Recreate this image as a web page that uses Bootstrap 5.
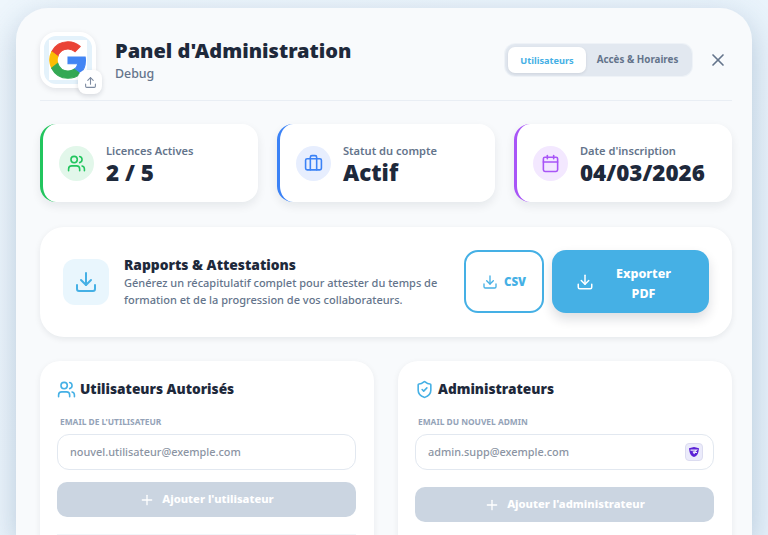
<!DOCTYPE html>
<html lang="fr">
<head>
<meta charset="utf-8">
<title>Panel d'Administration</title>
<link href="https://cdn.jsdelivr.net/npm/bootstrap@5.3.0/dist/css/bootstrap.min.css" rel="stylesheet">
<style>
html,body{height:535px;overflow:hidden}
body{font-family:"Noto Sans",sans-serif;color:#1e293b;background:linear-gradient(135deg,#eef6fc,#e6f1fa);padding:8px 16px 0}
svg.ico{fill:none;stroke:currentColor;stroke-width:2;stroke-linecap:round;stroke-linejoin:round;flex:none}
.sheet{background:#f8fafc;border-radius:32px 32px 0 0;padding:24px 20px 0 24px;height:527px;overflow:hidden;box-shadow:0 10px 30px rgba(70,110,150,.32)}
.head{height:69px;border-bottom:1px solid #e9eef4}
.logo-box{width:56px;height:56px;border:4px solid #fff;border-radius:16px;background:#e4f2fb;box-shadow:0 2px 6px rgba(15,23,42,.1);margin-right:19px}
.logo-in{width:38px;height:40px;background:#fff}
.up-btn{right:-10px;bottom:-10px;width:24px;height:24px;border-radius:8px;background:#fff;color:#7c8aa0;box-shadow:0 2px 5px rgba(15,23,42,.14)}
.ttl-w{padding-top:7px}
.ttl{font-size:20px;font-weight:900;line-height:24px;color:#1e293b;margin:0}
.sub{font-size:12.4px;line-height:20px;color:#64748b;font-weight:500;margin-top:1px}
.tabs{background:#e2e8f0;border-radius:10px;padding:2px 3px;height:32px;font-weight:700;box-shadow:0 0 0 1px #eef2f7}
.tab-on{background:#fff;color:#45b0e5;border-radius:7px;width:78px;height:26px;font-size:9.2px;padding-top:1px;box-shadow:0 1px 3px rgba(15,23,42,.1)}
.tab-off{color:#64748b;width:103px;height:26px;font-size:9.8px;padding-top:1px}
.x-btn{color:#64748b;margin:0 4px 0 16px}
.stats{gap:19px;margin-top:23px}
.stat{flex:1 1 0;height:78px;background:#fff;border-radius:16px;border-left:3px solid;box-shadow:0 4px 10px rgba(15,23,42,.08);padding-left:16px}
.st-g{border-left-color:#22c55e}.st-b{border-left-color:#3b82f6}.st-p{border-left-color:#a855f7}
.circle{width:35px;height:35px;border-radius:50%;margin-right:12px}
.c-g{background:#e2f7ea;color:#22c55e}.c-b{background:#e7eefe;color:#3b82f6}.c-p{background:#f3e8ff;color:#a855f7}
.st-t{padding-top:4px}
.st-l{font-size:11.1px;font-weight:600;line-height:16px;color:#64748b}
.st-v{font-size:22.4px;font-weight:900;line-height:28px;color:#1e293b}
.rep{height:110px;margin-top:25px;background:#fff;border-radius:24px;box-shadow:0 2px 6px rgba(15,23,42,.08);padding:0 23px}
.rep-ic{width:46px;height:46px;border-radius:12px;background:#e9f6fd;color:#45b0e5;margin:0 15px 1px 0}
.rep-t{font-size:13.8px;font-weight:900;line-height:18px;color:#1e293b}
.rep-d{font-size:11px;font-weight:500;line-height:17.5px;color:#64748b;width:330px}
.act-a,.act-b{height:63px;border-radius:14px;font-weight:800;line-height:20px;padding:0;margin-bottom:1px}
.act-a{width:80px;margin-right:8px;background:#fff;border:2px solid #45b0e5;color:#45b0e5;font-size:11.5px;font-weight:900}
.act-a svg{margin-right:6px}
.act-a:hover{background:#fff;color:#45b0e5;border-color:#45b0e5}
.act-b{width:157px;background:#45b0e5;border:0;color:#fff;font-size:12.5px;box-shadow:0 6px 12px rgba(15,23,42,.14);padding:0 24px}
.act-b:hover{background:#45b0e5;color:#fff}
.act-lbl{padding:4px 0 0 8px}
.cols{gap:24px;margin-top:24px}
.pane{flex:1 1 0;height:240px;background:#fff;border-radius:20px;box-shadow:0 2px 6px rgba(15,23,42,.07);padding:17px 18px 0 17px}
.pane-h{font-size:13.7px;font-weight:900;line-height:22px;color:#1e293b;height:22px}
.pane-h svg{color:#45b0e5;margin-right:4px}
.fld{font-size:8.4px;font-weight:700;line-height:14px;color:#94a3b8;text-transform:uppercase;margin:15px 0 5px 3px}
.inp{height:36px;border:1px solid #e2e8f0;border-radius:12px;font-size:10.9px;padding:0 12px 2px;color:#1e293b;font-family:inherit;box-shadow:none}
.inp::placeholder{color:#8b94a3;font-weight:500}
.btn.add,.btn.add:disabled{height:35px;width:100%;background:#cbd5e1;border:0;border-radius:10px;color:#fff;font-size:11.2px;font-weight:800;opacity:1}
.add svg{margin-right:7px}
.gap-a{margin-top:12px}.gap-b{margin-top:17px}
.mgr{right:11px;top:9px;width:18px;height:18px;border-radius:4px;background:#ebebfb;border:1px solid #dcdcf0}
.rule{border-top:1px solid #f1f5f9;margin-top:17px}
</style>
</head>
<body>
<div class="sheet">
  <div class="head d-flex align-items-start">
    <div class="logo-box position-relative d-flex align-items-center justify-content-center flex-shrink-0">
      <div class="logo-in d-flex align-items-center justify-content-center">
        <svg width="38" height="38" viewBox="-1 -1 50 50" aria-hidden="true"><path fill="#EA4335" stroke="#EA4335" stroke-width="1.4" d="M24 9.5c3.54 0 6.71 1.22 9.21 3.6l6.85-6.85C35.9 2.38 30.47 0 24 0 14.62 0 6.51 5.38 2.56 13.22l7.98 6.19C12.43 13.72 17.74 9.5 24 9.5z"/><path fill="#4285F4" stroke="#4285F4" stroke-width="1.4" d="M46.98 24.55c0-1.57-.15-3.09-.38-4.55H24v9.02h12.94c-.58 2.96-2.26 5.48-4.78 7.18l7.73 6c4.51-4.18 7.09-10.36 7.09-17.65z"/><path fill="#FBBC05" stroke="#FBBC05" stroke-width="1.4" d="M10.53 28.59c-.48-1.45-.76-2.99-.76-4.59s.27-3.14.76-4.59l-7.98-6.19C.92 16.46 0 20.12 0 24c0 3.88.92 7.54 2.56 10.78l7.97-6.19z"/><path fill="#34A853" stroke="#34A853" stroke-width="1.4" d="M24 48c6.48 0 11.93-2.13 15.89-5.81l-7.73-6c-2.15 1.45-4.92 2.3-8.16 2.3-6.26 0-11.57-4.22-13.47-9.91l-7.98 6.19C6.51 42.62 14.62 48 24 48z"/></svg>
      </div>
      <div class="up-btn position-absolute d-flex align-items-center justify-content-center">
        <svg class="ico" width="13" height="13" viewBox="0 0 24 24"><path d="M21 15v4a2 2 0 0 1-2 2H5a2 2 0 0 1-2-2v-4"/><polyline points="17 8 12 3 7 8"/><line x1="12" x2="12" y1="3" y2="15"/></svg>
      </div>
    </div>
    <div class="flex-grow-1 ttl-w">
      <h1 class="ttl">Panel d'Administration</h1>
      <div class="sub">Debug</div>
    </div>
    <div class="d-flex align-items-center mt-2 pt-1">
      <div class="tabs d-flex align-items-center">
        <div class="tab-on d-flex align-items-center justify-content-center">Utilisateurs</div>
        <div class="tab-off d-flex align-items-center justify-content-center">Accès &amp; Horaires</div>
      </div>
      <svg class="ico x-btn" width="20" height="20" viewBox="0 0 24 24"><path d="M18 6 6 18"/><path d="m6 6 12 12"/></svg>
    </div>
  </div>

  <div class="stats d-flex">
    <div class="stat st-g d-flex align-items-center">
      <div class="circle c-g d-flex align-items-center justify-content-center flex-shrink-0">
        <svg class="ico" width="19" height="19" viewBox="0 0 24 24"><path d="M16 21v-2a4 4 0 0 0-4-4H6a4 4 0 0 0-4 4v2"/><circle cx="9" cy="7" r="4"/><path d="M22 21v-2a4 4 0 0 0-3-3.87"/><path d="M16 3.13a4 4 0 0 1 0 7.75"/></svg>
      </div>
      <div class="st-t"><div class="st-l">Licences Actives</div><div class="st-v">2 / 5</div></div>
    </div>
    <div class="stat st-b d-flex align-items-center">
      <div class="circle c-b d-flex align-items-center justify-content-center flex-shrink-0">
        <svg class="ico" width="19" height="19" viewBox="0 0 24 24"><path d="M16 20V4a2 2 0 0 0-2-2h-4a2 2 0 0 0-2 2v16"/><rect width="20" height="14" x="2" y="6" rx="2"/></svg>
      </div>
      <div class="st-t"><div class="st-l">Statut du compte</div><div class="st-v">Actif</div></div>
    </div>
    <div class="stat st-p d-flex align-items-center">
      <div class="circle c-p d-flex align-items-center justify-content-center flex-shrink-0">
        <svg class="ico" width="19" height="19" viewBox="0 0 24 24"><path d="M8 2v4"/><path d="M16 2v4"/><rect width="18" height="18" x="3" y="4" rx="2"/><path d="M3 10h18"/></svg>
      </div>
      <div class="st-t"><div class="st-l">Date d'inscription</div><div class="st-v">04/03/2026</div></div>
    </div>
  </div>

  <div class="rep d-flex align-items-center">
    <div class="rep-ic d-flex align-items-center justify-content-center flex-shrink-0">
      <svg class="ico" width="24" height="24" viewBox="0 0 24 24"><path d="M21 15v4a2 2 0 0 1-2 2H5a2 2 0 0 1-2-2v-4"/><polyline points="7 10 12 15 17 10"/><line x1="12" x2="12" y1="15" y2="3"/></svg>
    </div>
    <div class="flex-grow-1">
      <div class="rep-t">Rapports &amp; Attestations</div>
      <div class="rep-d">Générez un récapitulatif complet pour attester du temps de formation et de la progression de vos collaborateurs.</div>
    </div>
    <button type="button" class="btn act-a d-flex align-items-center justify-content-center flex-shrink-0">
      <svg class="ico" width="16" height="16" viewBox="0 0 24 24"><path d="M21 15v4a2 2 0 0 1-2 2H5a2 2 0 0 1-2-2v-4"/><polyline points="7 10 12 15 17 10"/><line x1="12" x2="12" y1="15" y2="3"/></svg>CSV
    </button>
    <button type="button" class="btn act-b d-flex align-items-center flex-shrink-0">
      <svg class="ico" width="18" height="18" viewBox="0 0 24 24"><path d="M21 15v4a2 2 0 0 1-2 2H5a2 2 0 0 1-2-2v-4"/><polyline points="7 10 12 15 17 10"/><line x1="12" x2="12" y1="15" y2="3"/></svg>
      <span class="flex-grow-1 text-center act-lbl">Exporter<br>PDF</span>
    </button>
  </div>

  <div class="cols d-flex">
    <div class="pane">
      <div class="pane-h d-flex align-items-center">
        <svg class="ico" width="19" height="19" viewBox="0 0 24 24"><path d="M16 21v-2a4 4 0 0 0-4-4H6a4 4 0 0 0-4 4v2"/><circle cx="9" cy="7" r="4"/><path d="M22 21v-2a4 4 0 0 0-3-3.87"/><path d="M16 3.13a4 4 0 0 1 0 7.75"/></svg>
        Utilisateurs Autorisés
      </div>
      <div class="fld">Email de l'utilisateur</div>
      <input class="form-control inp" type="email" placeholder="nouvel.utilisateur@exemple.com">
      <button type="button" class="btn add gap-a d-flex align-items-center justify-content-center" disabled>
        <svg class="ico" width="16" height="16" viewBox="0 0 24 24"><path d="M5 12h14"/><path d="M12 5v14"/></svg>Ajouter l'utilisateur
      </button>
      <div class="rule"></div>
    </div>
    <div class="pane">
      <div class="pane-h d-flex align-items-center">
        <svg class="ico" width="19" height="19" viewBox="0 0 24 24"><path d="M20 13c0 5-3.5 7.5-7.66 8.95a1 1 0 0 1-.67-.01C7.5 20.5 4 18 4 13V6a1 1 0 0 1 1-1c2 0 4.5-1.2 6.24-2.72a1.17 1.17 0 0 1 1.52 0C14.51 3.81 17 5 19 5a1 1 0 0 1 1 1z"/><path d="m9 12 2 2 4-4"/></svg>
        Administrateurs
      </div>
      <div class="fld">Email du nouvel admin</div>
      <div class="position-relative">
        <input class="form-control inp" type="email" placeholder="admin.supp@exemple.com">
        <div class="mgr position-absolute d-flex align-items-center justify-content-center">
          <svg width="12" height="12" viewBox="0 0 12 12" aria-hidden="true"><path fill="#5b21d6" d="M1 2.2 6 1l5 1.2-.5 3.2C10.200 8 8.500 10 6 11 3.500 10 1.800 8 1.500 5.400Z"/><path fill="none" stroke="#ebebfb" stroke-width="1.200" d="M2.500 4.200h6L6 6.500h3M6.500 8 5 5.500"/></svg>
        </div>
      </div>
      <button type="button" class="btn add gap-b d-flex align-items-center justify-content-center" disabled>
        <svg class="ico" width="16" height="16" viewBox="0 0 24 24"><path d="M5 12h14"/><path d="M12 5v14"/></svg>Ajouter l'administrateur
      </button>
    </div>
  </div>
</div>
</body>
</html>
